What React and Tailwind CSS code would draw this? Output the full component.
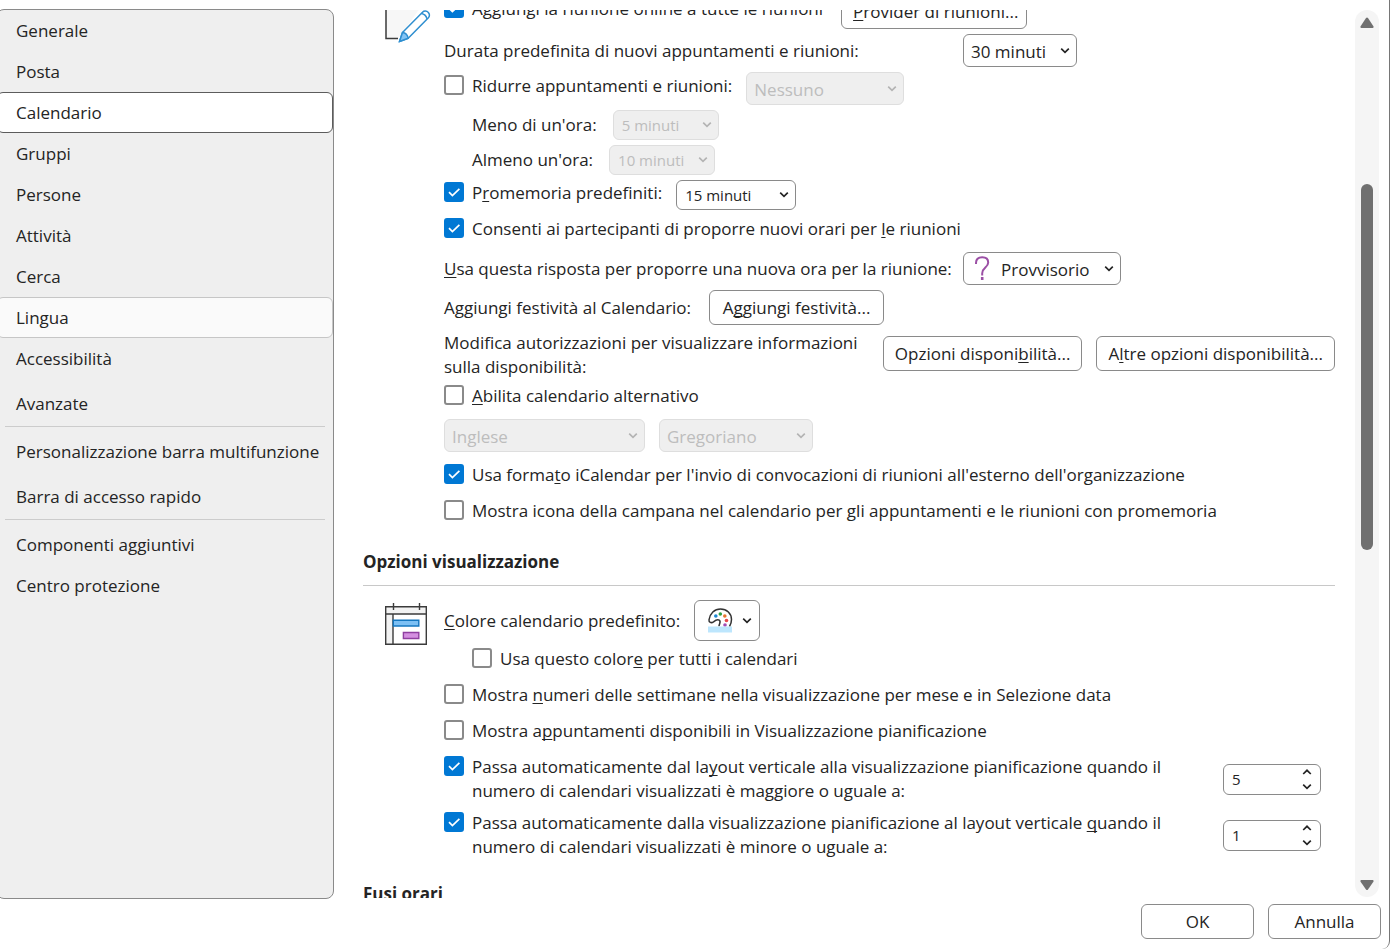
import { useState } from "react";

const NAV_GROUPS = [
  [
    "Generale",
    "Posta",
    "Calendario",
    "Gruppi",
    "Persone",
    "Attività",
    "Cerca",
    "Lingua",
    "Accessibilità",
    "Avanzate",
  ],
  ["Personalizzazione barra multifunzione", "Barra di accesso rapido"],
  ["Componenti aggiuntivi", "Centro protezione"],
];

// entries with a little extra room above them
const SPACED = ["Avanzate", "Barra di accesso rapido"];

export default function App() {
  const [page, setPage] = useState("Calendario");

  return (
    <div className="flex h-screen flex-col overflow-hidden rounded-br-lg border-r border-[#767676] bg-white pt-[9px] font-['Open_Sans','Noto_Sans',sans-serif] text-[17px] leading-6 text-[#242424]">
      <div className="flex min-h-0 flex-1">
        <Sidebar page={page} onSelect={setPage} />

        <main className="mt-px mb-px min-w-0 flex-1 overflow-hidden pr-5 pl-[29px]">
          <div className="-mt-4">
            <CalendarOptions />
            <DisplayOptions />
            <h2 className="mt-[23px] font-bold">Fusi orari</h2>
          </div>
        </main>

        <Scrollbar />
      </div>

      {/* Footer */}
      <div className="flex justify-end gap-[14px] pt-[5px] pr-2 pb-[10px]">
        <Button className="w-[113px]">OK</Button>
        <Button className="w-[113px]">Annulla</Button>
      </div>
    </div>
  );
}

function Sidebar({ page, onSelect }) {
  return (
    <nav className="-ml-1 w-[338px] shrink-0 rounded-lg border border-[#8a8a8a] bg-[#efefef]">
      {NAV_GROUPS.map((group, i) => (
        <div key={i}>
          {i > 0 && (
            <hr className="mt-[2px] mr-2 mb-1 ml-2 border-[#cccccc]" />
          )}
          {group.map((name) => (
            <button
              key={name}
              type="button"
              onClick={() => onSelect(name)}
              className={`block h-[41px] w-full rounded-md border pl-[18px] text-left ${
                SPACED.includes(name) ? "mt-1" : ""
              } ${
                name === page
                  ? "border-[#5c5c5c] bg-white"
                  : name === "Lingua"
                    ? "border-[#c6c6c6] bg-[#fafafa]"
                    : "border-transparent"
              }`}
            >
              {name}
            </button>
          ))}
        </div>
      ))}
    </nav>
  );
}

function CalendarOptions() {
  return (
    <section className="flex">
      <div className="w-[81px] shrink-0 pt-[14px] pl-[22px]">
        <PencilIcon />
      </div>

      <div className="min-w-0 flex-1">
        <div className="flex items-start gap-[18px]">
          <div className="pt-[3px]">
            <Checkbox defaultChecked>
              Aggiungi la riunione online a tutte le riunioni
            </Checkbox>
          </div>
          <Button className="w-[186px]">
            <Key>P</Key>rovider di riunioni...
          </Button>
        </div>

        <div className="mt-[5px] flex items-center">
          <label htmlFor="durata" className="w-[519px]">
            Durata predefinita di nuovi appuntamenti e riunioni:
          </label>
          <Select id="durata" value="30 minuti" className="w-[114px]" />
        </div>

        <div className="mt-[5px] flex items-start gap-[14px]">
          <div className="pt-[2px]">
            <Checkbox>Ridurre appuntamenti e riunioni:</Checkbox>
          </div>
          <Select label="Ridurre" value="Nessuno" disabled className="w-[158px]" />
        </div>

        <div className="mt-[5px] flex items-center gap-4 pl-7">
          <label htmlFor="meno">Meno di un'ora:</label>
          <Select id="meno" value="5 minuti" small disabled className="w-[106px]" />
        </div>

        <div className="mt-[5px] flex items-center gap-4 pl-7">
          <label htmlFor="almeno">Almeno un'ora:</label>
          <Select id="almeno" value="10 minuti" small disabled className="w-[106px]" />
        </div>

        <div className="mt-[5px] flex items-start gap-[14px]">
          <div className="pt-px">
            <Checkbox defaultChecked>
              P<Key>r</Key>omemoria predefiniti:
            </Checkbox>
          </div>
          <Select label="Promemoria" value="15 minuti" small className="w-[120px]" />
        </div>

        <div className="mt-[7px]">
          <Checkbox defaultChecked>
            Consenti ai partecipanti di proporre nuovi orari per <Key>l</Key>e
            riunioni
          </Checkbox>
        </div>

        <div className="mt-[11px] flex items-center">
          <label htmlFor="risposta" className="w-[519px]">
            <Key>U</Key>sa questa risposta per proporre una nuova ora per la
            riunione:
          </label>
          <Select
            id="risposta"
            value="Provvisorio"
            icon={<QuestionIcon />}
            className="w-[158px]"
          />
        </div>

        <div className="mt-[5px] flex items-center gap-[18px]">
          <span>Aggiungi festività al Calendario:</span>
          <Button className="w-[175px]">
            A<Key>g</Key>giungi festività...
          </Button>
        </div>

        <div className="mt-[6px] flex items-start gap-[14px]">
          <p className="min-w-0 flex-1">
            Modifica autorizzazioni per visualizzare informazioni sulla
            disponibilità:
          </p>
          <Button className="mt-[5px]">
            Opzioni disponi<Key>b</Key>ilità...
          </Button>
          <Button className="mt-[5px]">
            A<Key>l</Key>tre opzioni disponibilità...
          </Button>
        </div>

        <div className="mt-[5px]">
          <Checkbox>
            <Key>A</Key>bilita calendario alternativo
          </Checkbox>
        </div>

        <div className="mt-[11px] flex gap-[14px]">
          <Select label="Lingua calendario" value="Inglese" disabled className="w-[201px]" />
          <Select label="Tipo calendario" value="Gregoriano" disabled className="w-[154px]" />
        </div>

        <div className="mt-[11px]">
          <Checkbox defaultChecked>
            Usa forma<Key>t</Key>o iCalendar per l'invio di convocazioni di
            riunioni all'esterno dell'organizzazione
          </Checkbox>
        </div>

        <div className="mt-3">
          <Checkbox>
            Mostra icona della campana nel calendario per gli appuntamenti e le
            riunioni con promemoria
          </Checkbox>
        </div>
      </div>
    </section>
  );
}

function DisplayOptions() {
  return (
    <section className="mt-[27px]">
      <h2 className="font-bold">Opzioni visualizzazione</h2>
      <hr className="mt-[11px] border-[#c8c8c8]" />

      <div className="mt-[14px] flex">
        <div className="w-[81px] shrink-0 pt-[2px] pl-[21px]">
          <CalendarIcon />
        </div>

        <div className="min-w-0 flex-1">
          <div className="flex items-center gap-[14px]">
            <span>
              <Key>C</Key>olore calendario predefinito:
            </span>
            <button
              type="button"
              aria-label="Colore calendario predefinito"
              className="flex h-[41px] w-[66px] items-center justify-between rounded-md border border-[#8a8a8a] bg-white pr-[7px] pl-3"
            >
              <PaletteIcon />
              <Chevron />
            </button>
          </div>

          <div className="mt-[6px] pl-7">
            <Checkbox>
              Usa questo color<Key>e</Key> per tutti i calendari
            </Checkbox>
          </div>

          <div className="mt-3">
            <Checkbox>
              Mostra <Key>n</Key>umeri delle settimane nella visualizzazione per
              mese e in Selezione data
            </Checkbox>
          </div>

          <div className="mt-3">
            <Checkbox>
              Mostra a<Key>p</Key>puntamenti disponibili in Visualizzazione
              pianificazione
            </Checkbox>
          </div>

          <div className="mt-3 flex items-start justify-between pr-[14px]">
            <div className="w-[724px]">
              <Checkbox defaultChecked>
                Passa automaticamente dal la<Key>y</Key>out verticale alla
                visualizzazione pianificazione quando il numero di calendari
                visualizzati è maggiore o uguale a:
              </Checkbox>
            </div>
            <NumberBox label="Numero massimo" initial={5} />
          </div>

          <div className="mt-2 flex items-start justify-between pr-[14px]">
            <div className="w-[724px]">
              <Checkbox defaultChecked>
                Passa automaticamente dalla visualizzazione pianificazione al
                layout verticale <Key>q</Key>uando il numero di calendari
                visualizzati è minore o uguale a:
              </Checkbox>
            </div>
            <NumberBox label="Numero minimo" initial={1} />
          </div>
        </div>
      </div>
    </section>
  );
}

/* Underlined access key inside a label */
function Key({ children }) {
  return (
    <u className="decoration-1 underline-offset-2 [text-decoration-skip-ink:none]">
      {children}
    </u>
  );
}

function Button({ children, className = "" }) {
  return (
    <button
      type="button"
      className={`h-[35px] shrink-0 rounded-md border border-[#8a8a8a] bg-white px-[11px] whitespace-nowrap hover:bg-gray-50 ${className}`}
    >
      {children}
    </button>
  );
}

function Checkbox({ children, defaultChecked }) {
  return (
    <label className="flex items-start gap-2">
      <span className="relative mt-px size-5 shrink-0">
        <input
          type="checkbox"
          defaultChecked={defaultChecked}
          className="peer block size-5 appearance-none rounded-[3px] border-2 border-[#8a8a8a] bg-white checked:border-[#0078d4] checked:bg-[#0078d4]"
        />
        <svg
          viewBox="0 0 20 20"
          className="pointer-events-none absolute inset-0 hidden size-5 peer-checked:block"
          fill="none"
          stroke="white"
          strokeWidth="1.7"
        >
          <path d="M5 10.2 8.4 13.6 15.4 6.8" />
        </svg>
      </span>
      <span>{children}</span>
    </label>
  );
}

function Select({ id, label, value, icon, small, disabled, className }) {
  return (
    <div className={`relative shrink-0 ${className}`}>
      <select
        id={id}
        aria-label={label}
        disabled={disabled}
        className={`block w-full appearance-none rounded-md border ${
          small ? "h-[30px] pl-2 text-[15px]" : "h-[33px] pt-[2px] pl-[7px]"
        } ${icon ? "pl-[37px]" : ""} ${
          disabled
            ? "border-[#dedede] bg-[#efefef] text-[#bdbdbd] opacity-100"
            : "border-[#8a8a8a] bg-white"
        }`}
      >
        <option>{value}</option>
      </select>
      {icon && (
        <span className="pointer-events-none absolute inset-y-0 left-[11px] flex items-center">
          {icon}
        </span>
      )}
      <span
        className={`pointer-events-none absolute inset-y-0 right-[7px] flex items-center ${
          disabled ? "text-[#b4b4b4]" : ""
        }`}
      >
        <Chevron />
      </span>
    </div>
  );
}

function NumberBox({ label, initial }) {
  const [value, setValue] = useState(initial);

  return (
    <div className="relative mt-[9px] w-[98px] shrink-0">
      <input
        type="number"
        aria-label={label}
        value={value}
        onChange={(e) => setValue(Number(e.target.value))}
        className="block h-[31px] w-full [appearance:textfield] rounded-md border border-[#8a8a8a] bg-white pb-px pl-2 text-[15px] [&::-webkit-inner-spin-button]:appearance-none"
      />
      <div className="absolute inset-y-0 right-2 flex flex-col justify-center">
        <button
          type="button"
          aria-label="Aumenta"
          onClick={() => setValue(value + 1)}
          className="flex h-[14px] w-3 items-center justify-center"
        >
          <Chevron up />
        </button>
        <button
          type="button"
          aria-label="Diminuisci"
          onClick={() => setValue(value - 1)}
          className="flex h-[14px] w-3 items-center justify-center"
        >
          <Chevron />
        </button>
      </div>
    </div>
  );
}

function Scrollbar() {
  return (
    <div className="mt-px mr-[10px] mb-[2px] flex w-6 shrink-0 flex-col items-center rounded-full bg-[#f5f5f5]">
      <button type="button" aria-label="Scorri su" className="flex h-6 items-center">
        <svg width="14" height="12" viewBox="0 0 14 12" fill="#707070">
          <path d="M6 2a1.3 1.3 0 0 1 2 0l5.400 8.200c.5.800.1 1.700-.8 1.700H1.400c-.9 0-1.300-.9-.8-1.700Z" />
        </svg>
      </button>
      <div className="grow-[150]" />
      <div className="w-3 grow-[366] rounded-full bg-[#707070]" />
      <div className="grow-[323]" />
      <button type="button" aria-label="Scorri giù" className="flex h-6 items-center">
        <svg width="14" height="12" viewBox="0 0 14 12" fill="#707070">
          <path d="M6 10.400a1.300 1.300 0 0 0 2 0l5.400-7.700c.5-.8.1-1.700-.8-1.700H1.400c-.9 0-1.300.9-.8 1.700Z" />
        </svg>
      </button>
    </div>
  );
}

function Chevron({ up }) {
  return (
    <svg width="10" height="10" viewBox="0 0 10 10" fill="none" stroke="currentColor" strokeWidth="1.7">
      <path d={up ? "M1.2 6 5 2.300 8.800 6" : "M1.2 2.700 5 6.400 8.800 2.700"} />
    </svg>
  );
}

function QuestionIcon() {
  return (
    <svg width="16" height="26" viewBox="0 0 16 26" fill="none" stroke="#9b4fa5" strokeWidth="2">
      <path d="M2 8V7C2 3.300 4.500 1.300 8.200 1.300c3.700 0 6 2 6 5.300 0 5-6 5-6 10.700V19.500" />
      <path d="M8.200 21v3" strokeWidth="2.600" />
    </svg>
  );
}

function PencilIcon() {
  return (
    <svg width="46" height="36" viewBox="0 0 46 36" fill="none">
      <path d="M1 0h34L14 30H1Z" fill="#f7f7f7" />
      <path d="M1 0v30.500h12" stroke="#3b3b3b" strokeWidth="1.5" />
      <path
        d="M14.500 33.500 17.500 24.500 37.500 4.200a3.700 3.700 0 0 1 5.700.2 3.700 3.700 0 0 1 .2 5.300L23.200 30.300Z"
        fill="white"
        stroke="#2f8fd0"
        strokeWidth="1.5"
        strokeLinejoin="round"
      />
      <path d="M14.500 33.500 17.500 24.500c2.500.2 5 2.500 5.700 5.800Z" fill="#83c4f5" stroke="#2f8fd0" strokeWidth="1.5" />
      <path d="M36.300 5.500c2.800.4 5 2.600 5.700 5.400" stroke="#2f8fd0" strokeWidth="1.5" />
    </svg>
  );
}

function CalendarIcon() {
  return (
    <svg width="44" height="44" viewBox="0 0 44 44" fill="none">
      <path d="M1.700 4.700h40.600v37.600H1.700Z" fill="white" />
      <path d="M1.700 4.700h40.600V12H1.700ZM1.700 12H9v30.300H1.700Z" fill="#f2f2f2" />
      <path
        d="M1.700 4.700h40.600v37.600H1.700ZM1.700 12h40.600M9 12v30.300M9.500 1v7M35.500 1v7"
        stroke="#3b3b3b"
        strokeWidth="1.4"
      />
      <path d="M9.300 18.300h25.500v5.700H9.300Z" fill="#7cc0f4" stroke="#1477c0" strokeWidth="1.4" />
      <path d="M19.400 30.500h15.400v6H19.400Z" fill="#d48fe0" stroke="#8f3fa0" strokeWidth="1.4" />
    </svg>
  );
}

function PaletteIcon() {
  return (
    <svg width="26" height="26" viewBox="0 0 26 26" fill="none">
      <path
        d="M6.500 13.800c-2.300 1.700-4.800.5-4.500-2C2.900 5.400 7.500 1 13.500 1 19.800 1 24.500 5.400 24.500 11.500c0 3-.8 5-2 7M6.500 13.800c2-1.600 4.200-2.600 5.700-1.600 2.300 1.500-.2 3.800-.2 6"
        stroke="#333"
        strokeWidth="1.5"
      />
      <circle cx="8.8" cy="8" r="1.8" fill="#1e88d2" />
      <circle cx="13.3" cy="6" r="1.8" fill="#2ea043" />
      <circle cx="17.8" cy="8" r="1.8" fill="#e8762d" />
      <circle cx="19.5" cy="12.5" r="1.8" fill="#e5484d" />
      <circle cx="18" cy="17" r="1.8" fill="#a24bb5" />
      <path d="M1 18.500h24v6H1Z" fill="#bde6fd" />
    </svg>
  );
}
